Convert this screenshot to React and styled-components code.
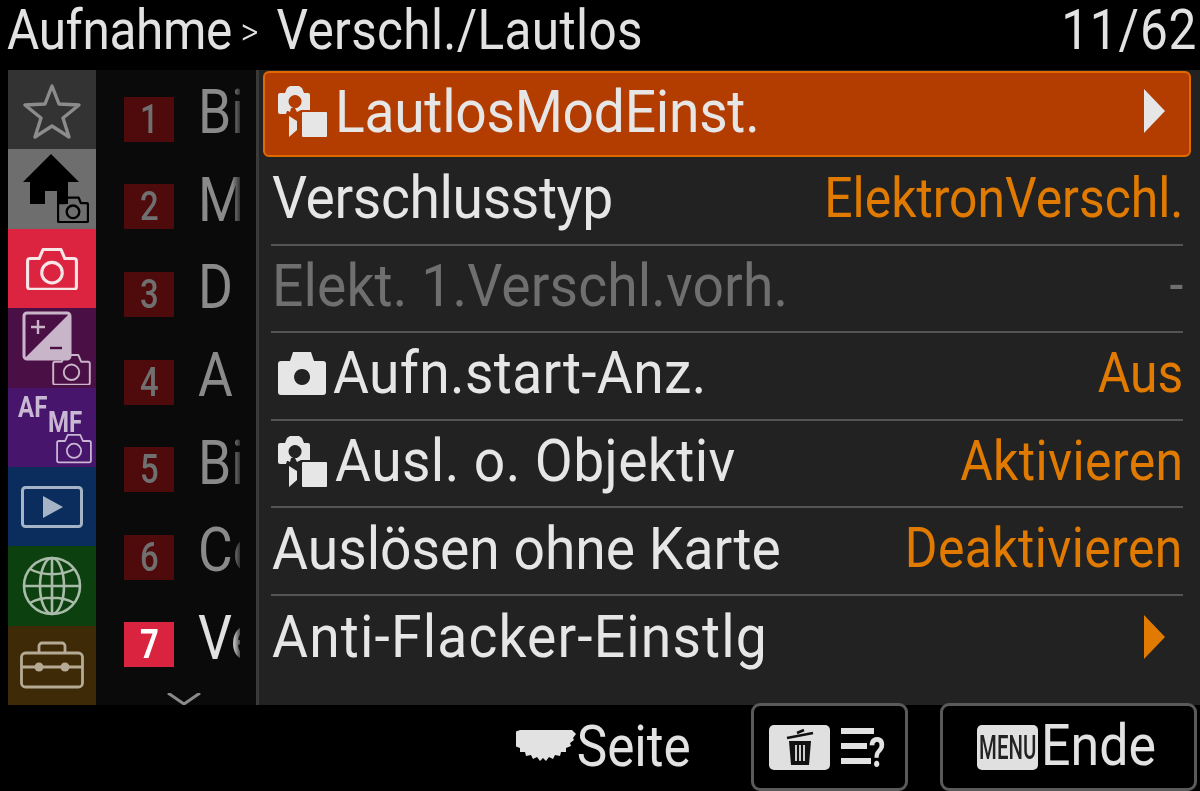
import styled, { createGlobalStyle } from 'styled-components'

const GlobalStyle = createGlobalStyle`
  * { box-sizing: border-box; }
  html, body { margin: 0; padding: 0; background: #000; }
  body { font-family: Roboto, "Liberation Sans", sans-serif; overflow: hidden; }
`;

const CameraOutline = ({ size = 40, color = '#fff', stroke = 2 }) => (
  <svg width={size} height={size * 0.84} viewBox="0 0 40 34" fill="none" stroke={color} strokeWidth={stroke} strokeLinejoin="round">
    <path d="M3 9h7l3-7h14l3 7h7a2 2 0 0 1 2 2v20a2 2 0 0 1-2 2H3a2 2 0 0 1-2-2V11a2 2 0 0 1 2-2z" />
    <circle cx="20" cy="20" r="8" />
  </svg>
);

const StarIcon = () => (
  <svg width="60" height="58" viewBox="0 0 60 58" fill="none" stroke="#8c8c8c" strokeWidth="3.4" strokeLinejoin="round">
    <path d="M30 5l7 18 20 1-16 13 6 19-17-11-17 11 6-19L3 24l20-1z" />
  </svg>
);

const HomeIcon = () => (
  <TabCanvas>
    <svg width="58" height="52" viewBox="0 0 58 52" fill="#000">
      <path d="M29 1l28 28H46v22H35V38H23v13H8V29H1z" />
    </svg>
    <BadgeCamera $right={7} $bottom={6}><CameraOutline size={32} color="#000" stroke={3} /></BadgeCamera>
  </TabCanvas>
);

const ExposureIcon = () => (
  <TabCanvas>
    <svg width="50" height="50" viewBox="0 0 50 50">
      <rect x="2" y="2" width="46" height="46" rx="3" fill="none" stroke="#c9b5c9" strokeWidth="3" />
      <path d="M47 3v44H3z" fill="#c9b5c9" />
      <path d="M9 16h14M16 9v14" stroke="#c9b5c9" strokeWidth="2.4" />
      <path d="M28 37h12" stroke="#4a1045" strokeWidth="2.4" />
    </svg>
    <BadgeCamera $right={5} $bottom={2}><CameraOutline size={39} color="#c9b5c9" /></BadgeCamera>
  </TabCanvas>
);

const FocusIcon = () => (
  <TabCanvas>
    <AfLabel>AF</AfLabel>
    <MfLabel>MF</MfLabel>
    <BadgeCamera $right={4} $bottom={3}><CameraOutline size={36} color="#c9b8d4" /></BadgeCamera>
  </TabCanvas>
);

const PlayIcon = () => (
  <svg width="62" height="42" viewBox="0 0 62 42" fill="none">
    <rect x="1.5" y="1.5" width="59" height="39" rx="3" stroke="#a4b3c6" strokeWidth="3" />
    <path d="M22 10l20 11-20 11z" fill="#a4b3c6" />
  </svg>
);

const GlobeIcon = () => (
  <svg width="60" height="60" viewBox="0 0 60 60" fill="none" stroke="#a9bba9" strokeWidth="2.6">
    <circle cx="30" cy="30" r="28" />
    <ellipse cx="30" cy="30" rx="12" ry="28" />
    <path d="M2 30h56M30 2v56M8 13c12 7 32 7 44 0M8 47c12-7 32-7 44 0" />
  </svg>
);

const ToolboxIcon = () => (
  <svg width="64" height="48" viewBox="0 0 64 48" fill="none" stroke="#b5aa94" strokeWidth="2.8">
    <path d="M19 12V5a3 3 0 0 1 3-3h20a3 3 0 0 1 3 3v7" />
    <rect x="1.5" y="12" width="61" height="34" rx="4" />
    <path d="M2 26h60" />
    <circle cx="19" cy="26" r="4.5" fill="#b5aa94" stroke="none" />
    <circle cx="45" cy="26" r="4.5" fill="#b5aa94" stroke="none" />
  </svg>
);

// camera with a dark aperture, small shutter flap and the square "silent" block
const SilentIcon = () => (
  <svg width="50" height="52" viewBox="0 0 50 52" fill="#e6e6e6">
    <path fillRule="evenodd" d="M2 8h5l2-5 3-2h9l3 2 2 5h4a2 2 0 0 1 2 2v15h-9l-4 2-2-4h-4l-1 4-2-1H9l-1 3H2a2 2 0 0 1-2-2V10a2 2 0 0 1 2-2zM17 10a6.5 6.5 0 1 0 .1 0z" />
    <path d="M11 31l8 5v9l-8 7z" />
    <rect x="24" y="27" width="25" height="25" rx="1" />
  </svg>
);

const SolidCamera = () => (
  <svg width="48" height="46" viewBox="0 0 48 46" fill="#e6e6e6">
    <path fillRule="evenodd" d="M3 11h9l3-9h18l3 9h9a3 3 0 0 1 3 3v28a3 3 0 0 1-3 3H3a3 3 0 0 1-3-3V14a3 3 0 0 1 3-3zM24 19a8 8 0 1 0 .1 0z" />
  </svg>
);

const Arrow = ({ color }) => (
  <svg width="21" height="44" viewBox="0 0 21 44" fill={color}><path d="M0 0l21 22L0 44z" /></svg>
);

const DialIcon = () => (
  <svg width="60" height="36" viewBox="0 0 60 36" fill="#e2e2e2">
    <path d="M4 1h52l4 4-3 4 1 2-4 3 1 3-5 2 0 4-5 0-1 4-5-1-2 4-4-2-3 4-3-3-3 3-3-4-4 2-2-4-5 1-1-4-5 0 0-4-5-2 1-3-4-3 1-2-3-4z" />
  </svg>
);

const TrashBadge = () => (
  <WhiteBadge>
    <svg width="28" height="38" viewBox="0 0 28 38" fill="none" stroke="#111" strokeWidth="2.6">
      <path d="M1 10L27 5M11 5l7-3" />
      <path d="M3 13h22l-2 24H5z" fill="#111" stroke="none" />
      <path d="M10 17v16M14 17v16M18 17v16" stroke="#e2e2e2" strokeWidth="1.8" />
    </svg>
  </WhiteBadge>
);

const ListHelp = () => (
  <HelpWrap>
    <HelpBar $width={33} />
    <HelpBar $width={26} />
    <HelpBar $width={30} />
    <HelpMark>?</HelpMark>
  </HelpWrap>
);

const tabs = [
  { bg: '#333333', icon: <StarIcon /> },
  { bg: '#6e6e6e', icon: <HomeIcon /> },
  { bg: '#dc2340', icon: <CameraOutline size={52} stroke={2.4} color="#f6e6e8" /> },
  { bg: '#4a1045', icon: <ExposureIcon /> },
  { bg: '#47156b', icon: <FocusIcon /> },
  { bg: '#0a2d5e', icon: <PlayIcon /> },
  { bg: '#0c400f', icon: <GlobeIcon /> },
  { bg: '#3e2a06', icon: <ToolboxIcon /> },
];

const groups = [
  { n: 1, label: 'Bi' },
  { n: 2, label: 'M' },
  { n: 3, label: 'D' },
  { n: 4, label: 'A' },
  { n: 5, label: 'Bi' },
  { n: 6, label: 'Ce' },
  { n: 7, label: 'Ve', active: true },
];

// track / valueTrack: small letter-spacing per label, the camera font has different widths
const rows = [
  { label: 'LautlosModEinst.', icon: <SilentIcon />, selected: true, arrow: '#e6e6e6', track: -0.3 },
  { label: 'Verschlusstyp', value: 'ElektronVerschl.', track: -0.4 },
  { label: 'Elekt. 1.Verschl.vorh.', value: '-', disabled: true, track: 0.15 },
  { label: 'Aufn.start-Anz.', value: 'Aus', icon: <SolidCamera />, track: 0.35 },
  { label: 'Ausl. o. Objektiv', value: 'Aktivieren', icon: <SilentIcon />, track: 0.45, valueTrack: 0.45 },
  { label: 'Auslösen ohne Karte', value: 'Deaktivieren', valueTrack: 0.45 },
  { label: 'Anti-Flacker-Einstlg', arrow: '#e07a00', last: true, track: 1.25 },
];

const App = () => {
  return (
    <Screen>
      <GlobalStyle />
      <Header>
        <Title>
          <Crumb $track={-0.4}>Aufnahme</Crumb>
          <Sep>&gt;</Sep>
          <Crumb $track={0.4}>Verschl./Lautlos</Crumb>
        </Title>
        <Pager>11/62</Pager>
      </Header>
      <Body>
        <Tabs>
          {tabs.map((t, i) => <Tab key={i} $bg={t.bg}>{t.icon}</Tab>)}
        </Tabs>
        <Groups>
          {groups.map((g) => (
            <Group key={g.n}>
              <GroupNum $active={g.active}><span>{g.n}</span></GroupNum>
              <GroupLabel $active={g.active}><span>{g.label}</span></GroupLabel>
            </Group>
          ))}
          <MoreChevron>
            <svg width="34" height="12" viewBox="0 0 34 12" fill="none" stroke="#8a8a8a" strokeWidth="3"><path d="M1 0l16 11L33 0" /></svg>
          </MoreChevron>
        </Groups>
        <Panel>
          {rows.map((r) => (
            <Row key={r.label} $selected={r.selected} $last={r.last}>
              <RowLabel $disabled={r.disabled}>
                {r.icon}
                <LabelText $track={r.track}>{r.label}</LabelText>
              </RowLabel>
              {r.value && <RowValue $disabled={r.disabled} $track={r.valueTrack}>{r.value}</RowValue>}
              {r.arrow && <ArrowSlot><Arrow color={r.arrow} /></ArrowSlot>}
            </Row>
          ))}
        </Panel>
      </Body>
      <Footer>
        <PageHint>
          <DialIcon />
          <PageText>Seite</PageText>
        </PageHint>
        <KeyBox $width={157} $gap={11} $pad={15}>
          <TrashBadge />
          <ListHelp />
        </KeyBox>
        <KeyBox $width={257} $gap={3} $pad={34}>
          <WhiteBadge><MenuText>MENU</MenuText></WhiteBadge>
          <EndText>Ende</EndText>
        </KeyBox>
      </Footer>
    </Screen>
  );
}

const Screen = styled.div`
  width: 1200px;
  height: 791px;
  background: #000;
  display: flex;
  flex-direction: column;
  color: #e2e2e2;
  overflow: hidden;
`;

const Header = styled.header`
  height: 70px;
  display: flex;
  align-items: center;
  justify-content: space-between;
  padding: 0 3px 10px 7px;
  font-size: 55px;
  flex-shrink: 0;
`;

const Title = styled.div`
  display: flex;
  align-items: center;
  white-space: nowrap;
  transform: scaleX(0.9);
  transform-origin: left center;
`;

const Crumb = styled.span`
  letter-spacing: ${(p) => p.$track}px;
`;

const Sep = styled.span`
  font-size: 38px;
  font-weight: 300;
  margin: 3px 20px 0 10px;
`;

const Pager = styled.div`
  letter-spacing: 1px;
  transform: scaleX(0.9);
  transform-origin: right center;
`;

const Body = styled.main`
  height: 635px;
  display: flex;
  padding-left: 8px;
  flex-shrink: 0;
`;

const Tabs = styled.nav`
  width: 88px;
  display: flex;
  flex-direction: column;
`;

const Tab = styled.div`
  flex: 1;
  background: ${(p) => p.$bg};
  display: flex;
  align-items: center;
  justify-content: center;
`;

const TabCanvas = styled.div`
  position: relative;
  width: 88px;
  height: 79px;
  display: flex;
  padding: 3px 0 0 14px;
`;

const BadgeCamera = styled.div`
  position: absolute;
  right: ${(p) => p.$right}px;
  bottom: ${(p) => p.$bottom}px;
  display: flex;
`;

const AfLabel = styled.span`
  position: absolute;
  left: 10px;
  top: 1px;
  font-size: 30px;
  font-weight: 700;
  color: #c9b8d4;
  transform: scaleX(0.8);
  transform-origin: left center;
`;

const MfLabel = styled(AfLabel)`
  left: 40px;
  top: 16px;
`;

const Groups = styled.div`
  position: relative;
  width: 160px;
  background: #0a0a0a;
  display: flex;
  flex-direction: column;
`;

const Group = styled.div`
  height: 87.6px;
  display: flex;
  align-items: center;
  padding: 11px 0 0 28px;
  gap: 24px;
`;

const GroupNum = styled.div`
  width: 50px;
  height: 45px;
  background: ${(p) => (p.$active ? '#d9233f' : '#4f0b0b')};
  color: ${(p) => (p.$active ? '#fff' : '#707070')};
  font-size: 40px;
  font-weight: ${(p) => (p.$active ? 700 : 500)};
  display: flex;
  align-items: center;
  justify-content: center;
  span { transform: scaleX(0.82); }
`;

const GroupLabel = styled.div`
  width: 42px;
  overflow: hidden;
  font-size: 62px;
  line-height: 70px;
  margin-top: -14px;
  white-space: nowrap;
  color: ${(p) => (p.$active ? '#e0e0e0' : '#8a8a8a')};
  mask-image: linear-gradient(to right, #000 82%, rgba(0, 0, 0, 0.3));
  span { display: inline-block; transform: scaleX(0.86); transform-origin: left center; }
`;

const MoreChevron = styled.div`
  position: absolute;
  left: 71px;
  bottom: 0;
  display: flex;
`;

const Panel = styled.section`
  flex: 1;
  background: #222222;
  border-left: 3px solid #3a3a3a;
  display: flex;
  flex-direction: column;
`;

const Row = styled.div`
  height: 87.6px;
  flex-shrink: 0;
  display: flex;
  align-items: center;
  justify-content: space-between;
  margin: 0 17px 0 12px;
  padding: 0 0 6px 1px;
  border-bottom: ${(p) => (p.$last ? 'none' : '2px solid #555')};
  ${(p) => p.$selected && `
    margin: 1px 9px 1px 4px;
    padding: 0 6px 6px 7px;
    height: 86px;
    background: #b33c00;
    border: 2px solid #e06a00;
    border-radius: 6px;
  `}
`;

const RowLabel = styled.div`
  display: flex;
  align-items: center;
  gap: 7px;
  font-size: 60px;
  white-space: nowrap;
  color: ${(p) => (p.$disabled ? '#6f6f6f' : '#e6e6e6')};
  svg { margin-left: 6px; flex-shrink: 0; }
`;

const LabelText = styled.span`
  letter-spacing: ${(p) => p.$track || 0}px;
  transform: scaleX(0.92);
  transform-origin: left center;
`;

const RowValue = styled.div`
  font-size: 55px;
  white-space: nowrap;
  letter-spacing: ${(p) => p.$track || 0}px;
  color: ${(p) => (p.$disabled ? '#6f6f6f' : '#e07a00')};
  transform: scaleX(0.906);
  transform-origin: right center;
`;

const ArrowSlot = styled.div`
  display: flex;
  margin-right: 18px;
`;

const Footer = styled.footer`
  flex: 1;
  display: flex;
  align-items: stretch;
  justify-content: flex-end;
  padding-right: 3px;
  font-size: 57px;
`;

const PageHint = styled.div`
  display: flex;
  align-items: center;
  margin-right: 28px;
  svg { margin: -2px -12px 0 0; flex-shrink: 0; }
`;

const PageText = styled.span`
  transform: scaleX(0.9);
  transform-origin: right center;
  margin-top: -3px;
`;

const EndText = styled.span`
  transform: scaleX(0.91);
  transform-origin: left center;
  margin-top: -3px;
`;

const KeyBox = styled.div`
  width: ${(p) => p.$width}px;
  height: 88px;
  margin-top: -2px;
  margin-left: 32px;
  padding-left: ${(p) => p.$pad}px;
  border: 3px solid #5a5a5a;
  border-radius: 9px;
  background: #000;
  display: flex;
  align-items: center;
  gap: ${(p) => p.$gap}px;
  position: relative;
`;

const WhiteBadge = styled.div`
  width: 61px;
  height: 45px;
  background: #e0e0e0;
  border-radius: 5px;
  display: flex;
  align-items: center;
  justify-content: center;
  overflow: hidden;
  flex-shrink: 0;
`;

const MenuText = styled.span`
  color: #222;
  font-size: 34px;
  font-weight: 500;
  transform: scaleX(0.6);
  white-space: nowrap;
`;

const HelpWrap = styled.div`
  position: relative;
  width: 50px;
  height: 45px;
  display: flex;
  flex-direction: column;
  gap: 9px;
  padding-top: 3px;
`;

const HelpBar = styled.div`
  width: ${(p) => p.$width}px;
  height: 6px;
  background: #e2e2e2;
`;

const HelpMark = styled.span`
  position: absolute;
  left: 28px;
  top: 10px;
  font-size: 42px;
  font-weight: 700;
  line-height: 36px;
  transform: scaleX(0.78);
  transform-origin: left center;
`;

export default App;
